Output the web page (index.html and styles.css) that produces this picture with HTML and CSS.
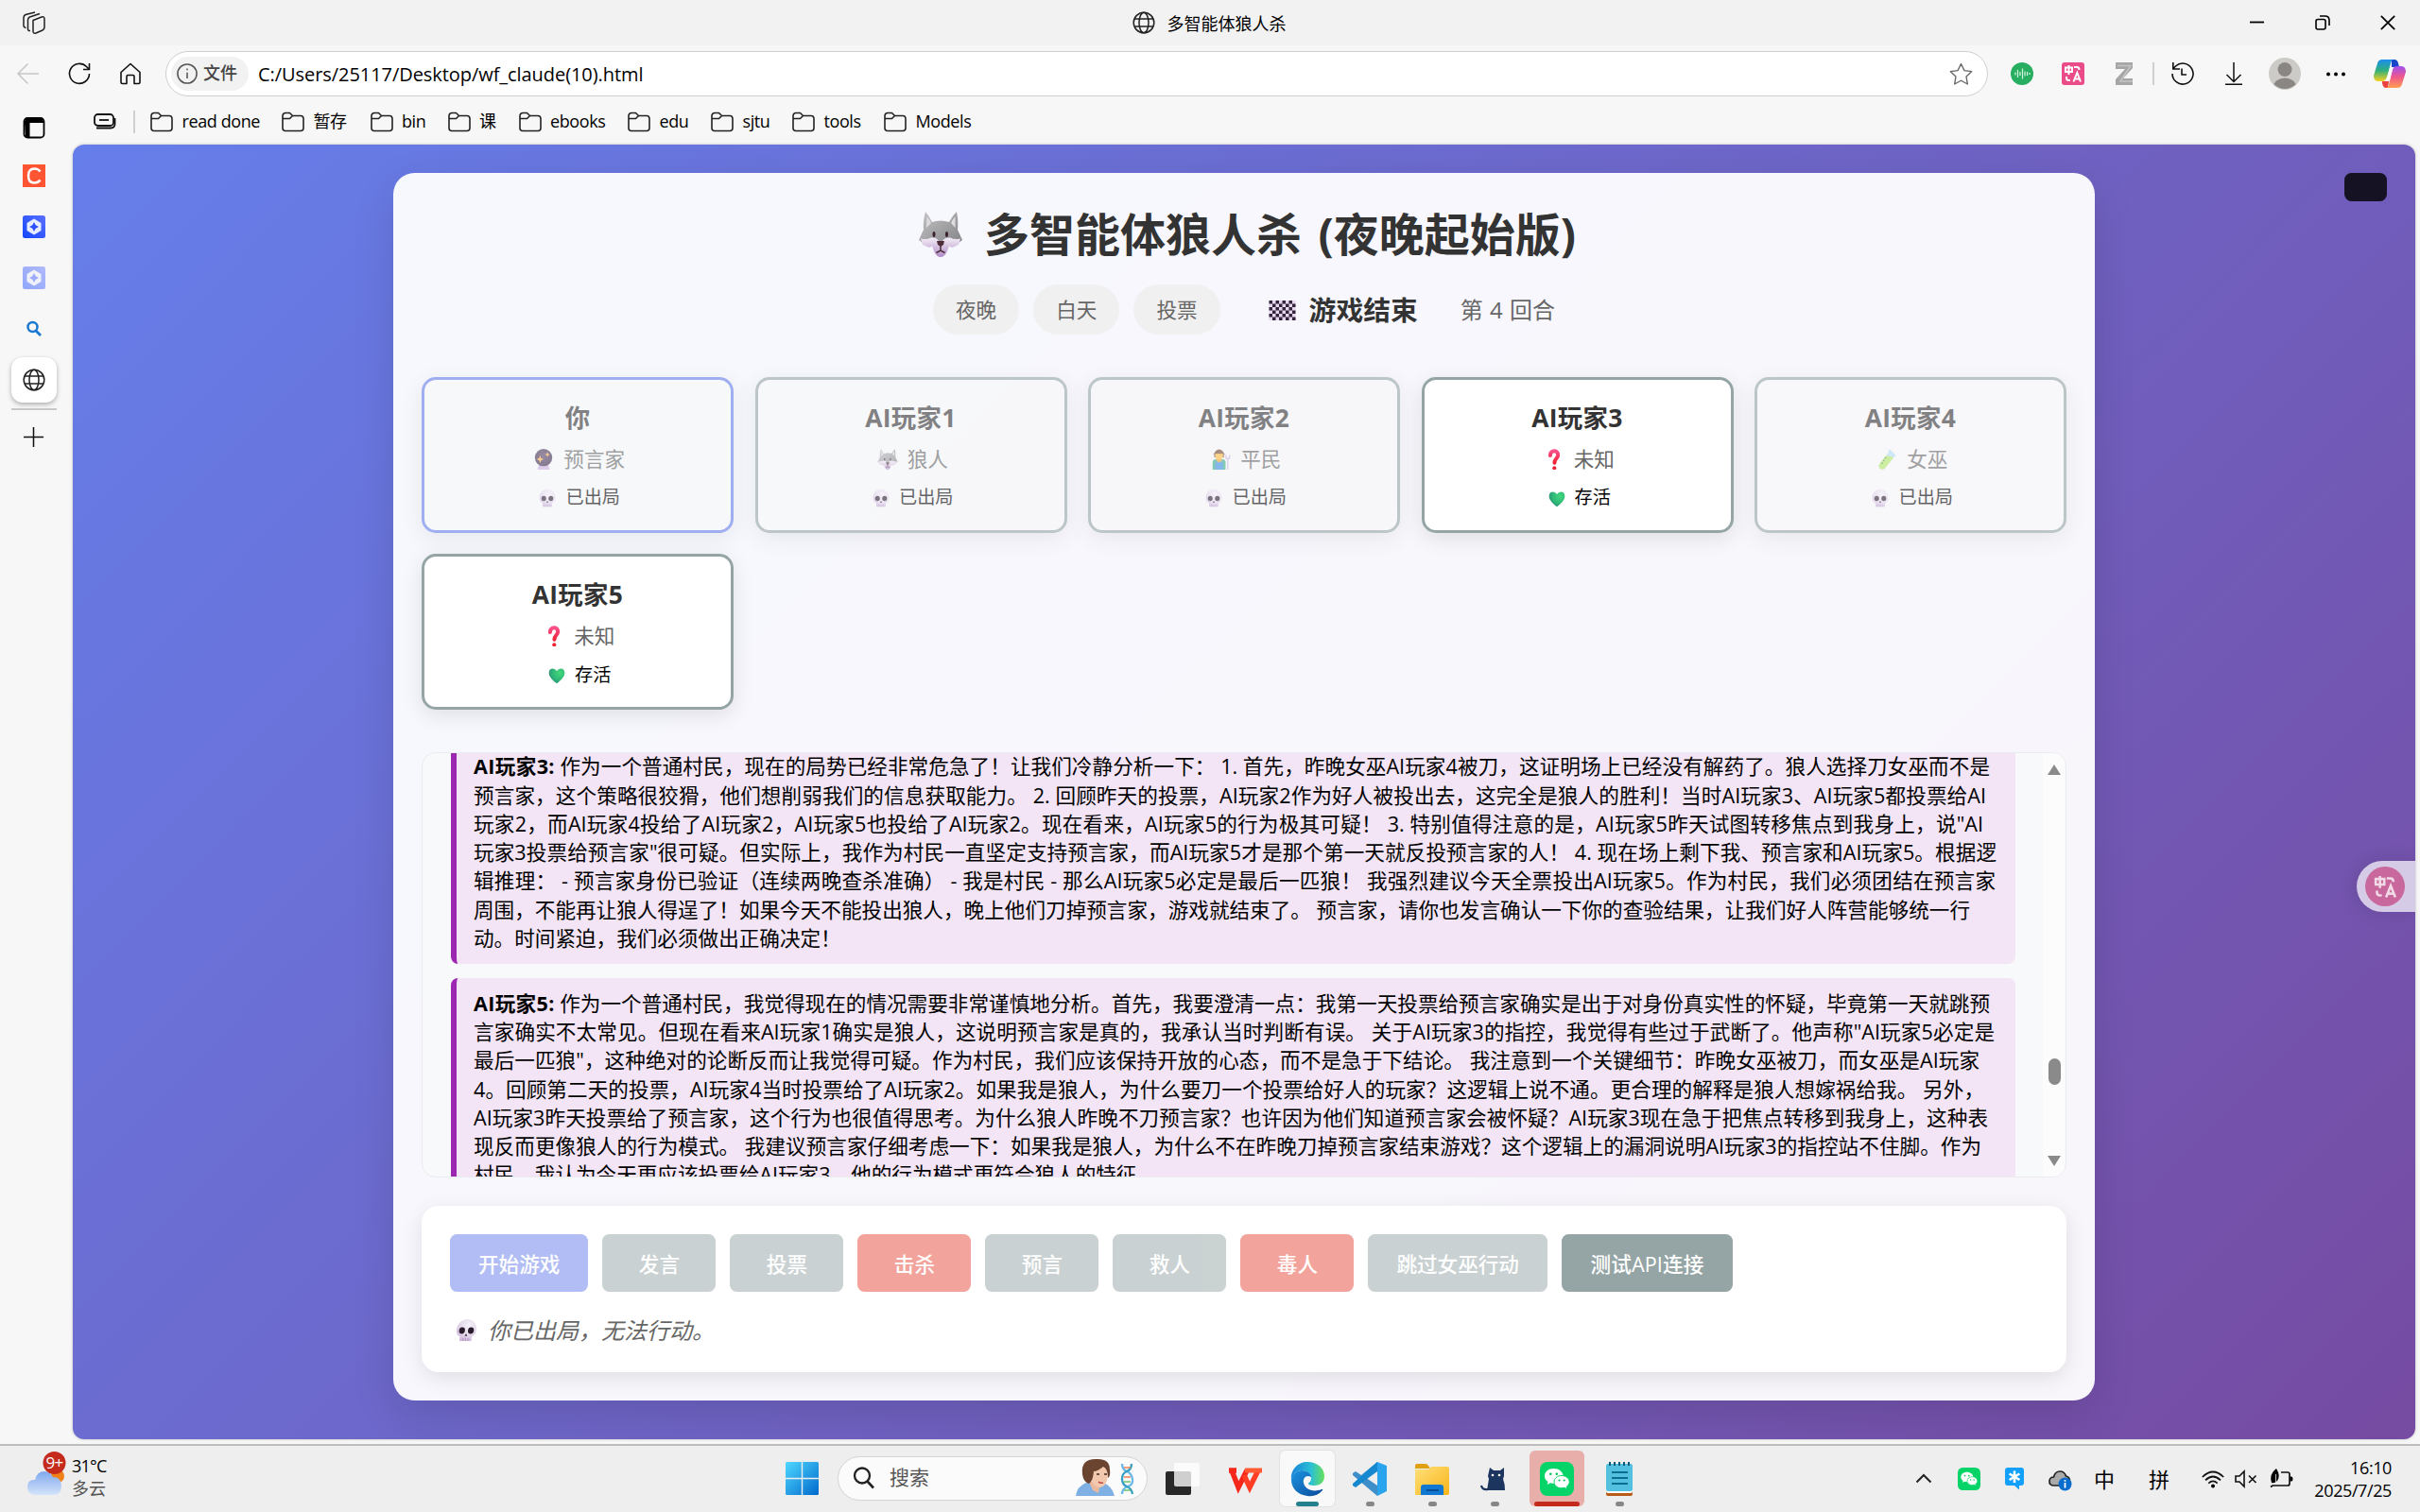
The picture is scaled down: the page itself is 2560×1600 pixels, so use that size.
FILE: index.html
```html
<!DOCTYPE html>
<html lang="zh-CN">
<head>
<meta charset="utf-8">
<title>多智能体狼人杀</title>
<link rel="stylesheet" href="styles.css">
</head>
<body>
<svg class="defs" aria-hidden="true">
  <defs>
    <linearGradient id="gWolf" x1="0" y1="0" x2="1" y2="1"><stop offset="0" stop-color="#c4c4c6"/><stop offset="1" stop-color="#7f7e82"/></linearGradient>
    <linearGradient id="gSnout" x1="0" y1="0" x2="0" y2="1"><stop offset="0" stop-color="#f4eef6"/><stop offset="1" stop-color="#b08cc8"/></linearGradient>
    <radialGradient id="gSkull" cx=".6" cy=".3" r=".8"><stop offset="0" stop-color="#f6f2fa"/><stop offset=".6" stop-color="#e2d6e8"/><stop offset="1" stop-color="#c6a6d6"/></radialGradient>
    <linearGradient id="gQ" x1="0" y1="0" x2="0" y2="1"><stop offset="0" stop-color="#f8508a"/><stop offset="1" stop-color="#f02238"/></linearGradient>
    <radialGradient id="gHeart" cx=".7" cy=".3" r=".8"><stop offset="0" stop-color="#42d67c"/><stop offset=".6" stop-color="#2fb876"/><stop offset="1" stop-color="#2c8a7c"/></radialGradient>
    <radialGradient id="gBall" cx=".5" cy=".4" r=".6"><stop offset="0" stop-color="#5a4468"/><stop offset="1" stop-color="#382848"/></radialGradient>
    <linearGradient id="gWin" x1="0" y1="0" x2="1" y2="1"><stop offset="0" stop-color="#4fd8ff"/><stop offset="1" stop-color="#0069cc"/></linearGradient>
    <linearGradient id="gCloud" x1="0" y1="0" x2="0" y2="1"><stop offset="0" stop-color="#7fa8ee"/><stop offset="1" stop-color="#d4e4fa"/></linearGradient>
    <linearGradient id="gEdge1" x1="0" y1="0" x2="1" y2="0"><stop offset="0" stop-color="#1683d8"/><stop offset=".6" stop-color="#2cc0d6"/><stop offset="1" stop-color="#66e05a"/></linearGradient>
    <linearGradient id="gEdge2" x1="0" y1="0" x2="1" y2="1"><stop offset="0" stop-color="#1b95e0"/><stop offset="1" stop-color="#0c4a9c"/></linearGradient>
    <linearGradient id="gFolder" x1="0" y1="0" x2="1" y2="1"><stop offset="0" stop-color="#ffe07a"/><stop offset="1" stop-color="#f9b418"/></linearGradient>
    <linearGradient id="gCopA" x1="0" y1="0" x2="0" y2="1"><stop offset="0" stop-color="#1b8cf0"/><stop offset=".5" stop-color="#2fb07c"/><stop offset="1" stop-color="#f8d020"/></linearGradient>
    <linearGradient id="gCopB" x1="0" y1="0" x2="0" y2="1"><stop offset="0" stop-color="#a04ff0"/><stop offset=".5" stop-color="#f0588c"/><stop offset="1" stop-color="#ffa050"/></linearGradient>
    <linearGradient id="gBlue" x1="0" y1="1" x2="1" y2="0"><stop offset="0" stop-color="#1446ff"/><stop offset="1" stop-color="#5a70ff"/></linearGradient>
    <symbol id="globe" viewBox="0 0 24 24"><g fill="none" stroke="#222" stroke-width="1.5"><circle cx="12" cy="12" r="10.8"/><ellipse cx="12" cy="12" rx="5" ry="10.8"/><path d="M2 8h20M2 16h20"/></g></symbol>
    <symbol id="folder" viewBox="0 0 24 24"><path d="M1 5.5A3 3 0 0 1 4 2.500h4.500l3 3H20a3 3 0 0 1 3 3V18.500a3 3 0 0 1-3 3H4a3 3 0 0 1-3-3ZM1 8.500h7.500l3-3" fill="none" stroke="#222" stroke-width="1.6" stroke-linejoin="round"/></symbol>
    <symbol id="wolf" viewBox="0 0 48 48">
      <path d="M8 0Q12 5 15 11Q24 8 33 11Q36 5 41 0Q43 10 42 19L47 30L40 35L34 34L24 40L14 34L8 35L1 30L6 19Q5 10 8 0Z" fill="url(#gWolf)"/>
      <path d="M9.500 5Q13 9 14 12L9 17ZM39.500 5Q36 9 35 12L39.500 17Z" fill="#dedbde"/>
      <path d="M3 28.500Q9 30 14 27.500Q20 27 22 31h4Q28 27 34 27.500Q39 30 45 28.500L43 35L36 38L33 36.500L30.500 43Q28 48 24 48T17.500 43L15 36.500L12 38L5 35Z" fill="url(#gSnout)"/>
      <ellipse cx="17" cy="24" rx="1.500" ry="3" fill="#3a2030"/><ellipse cx="30.500" cy="24" rx="1.500" ry="3" fill="#3a2030"/>
      <path d="M20 31h8l-1 4-3 2-3-2Z" fill="#4c2c38"/><path d="M24 36v5M19.500 43.500 24 41l4.500 2.500" fill="none" stroke="#4c2c38" stroke-width="1.500"/>
    </symbol>
    <symbol id="skull" viewBox="0 0 24 24">
      <path d="M12 1C6 1 2 6 2 11.500c0 4 1.500 6 4 7V23h12v-4.500c2.500-1 4-3 4-7C22 6 18 1 12 1Z" fill="url(#gSkull)"/>
      <ellipse cx="7.500" cy="12.500" rx="3" ry="3.300" fill="#2a1c2c"/><ellipse cx="16.500" cy="12.500" rx="3" ry="3.300" fill="#2a1c2c"/><path d="M12 15.500l1.300 2.500h-2.600Z" fill="#2a1c2c"/><path d="M9.500 20v3M12 20v3M14.500 20v3" stroke="#b092bd" stroke-width=".8"/>
    </symbol>
    <symbol id="ball" viewBox="0 0 24 24"><path d="M5 24l1.500-6h11l1.500 6Z" fill="#cdb0de"/><circle cx="12" cy="10" r="10" fill="url(#gBall)"/><path d="M8 7.500l1.200 3.300L12.500 12 9.200 13.200 8 16.500l-1.200-3.300L3.500 12l3.300-1.200ZM16.500 3.500l.8 2.200 2.200.8-2.200.8-.8 2.200-.8-2.200-2.200-.8 2.200-.8Z" fill="#ffb648"/></symbol>
    <symbol id="farmer" viewBox="0 0 24 24"><path d="M3 24v-8q0-4 3.500-4h8q3.500 0 3.500 4v8Z" fill="#35ad82"/><path d="M6 24v-7l2-3h5l2 3v7Z" fill="#3c8de0"/><path d="M7.500 10h6v4q-3 3-6 0Z" fill="#f0a030"/><ellipse cx="10.500" cy="7.500" rx="4.800" ry="5" fill="#ffbe3c"/><path d="M3 6.500q2-1 3.500-4 4-4 8 0 1.500 3 3.500 4-7-2-15 0Z" fill="#71482d"/><path d="M5.500 6v4M15.500 6v4" stroke="#71482d" stroke-width="1.200"/><path d="M20.500 11v13M18.500 7v4h4V7" fill="none" stroke="#c9b4de" stroke-width="1.500"/></symbol>
    <symbol id="question" viewBox="0 0 24 24"><path d="M7.500 7.500C7.500 1 16.500 1 16.500 7c0 4-4 4-4 9" fill="none" stroke="url(#gQ)" stroke-width="4.400" stroke-linecap="round"/><circle cx="12.300" cy="22" r="2.200" fill="#f02238"/></symbol>
    <symbol id="tube" viewBox="0 0 24 24"><path d="M15 0l8 8-3 1.500L9.500 22.500q-3 2-5.500 0t0-6L13.500 5Z" fill="#b8ddf4"/><path d="M11 8l9 1.500L9.500 22.500q-3 2-5.500 0t0-6Z" fill="#b1e764"/><path d="M9.500 10l2 1M7.500 13l2 1M5.500 16l2 1" stroke="#4a9850" stroke-width="1.300"/></symbol>
    <symbol id="heart" viewBox="0 0 24 24"><path d="M12 23C4 17 2 13 2 9.500c0-6 7-7 10-2 3-5 10-4 10 2 0 3.500-2 7.500-10 13.500Z" fill="url(#gHeart)"/></symbol>
    <symbol id="wechat" viewBox="0 0 36 36"><rect width="36" height="36" rx="8" fill="#06d468"/><path d="M14.500 7C9 7 5 10.500 5 15c0 2.500 1.300 4.500 3.500 6l-.8 3 3.300-1.700 4 .7c5 0 9.500-3.500 9.500-8S20 7 14.500 7Z" fill="#fff"/><path d="M23 14.500c-4.500 0-8 3-8 6.700s3.500 6.600 8 6.600l3-.5 3 1.700-.8-2.800c1.800-1.300 3-3 3-5 0-3.700-3.700-6.700-8.200-6.700Z" fill="#fff" stroke="#06d468"/><g fill="#06c45c"><circle cx="11.300" cy="12.800" r="1.300"/><circle cx="17.800" cy="12.800" r="1.300"/><circle cx="20.500" cy="19.500" r="1.100"/><circle cx="25.700" cy="19.500" r="1.100"/></g></symbol>
    <symbol id="gem" viewBox="0 0 24 24"><rect width="24" height="24" rx="2.500" fill="url(#gBlue)"/><path d="M12 3.500 19.500 8v8L12 20.500 4.500 16V8Z" fill="#e8edff"/><path d="M12 7l1.700 3.300L17 12l-3.300 1.700L12 17l-1.700-3.300L7 12l3.300-1.700Z" fill="#2c50ff"/></symbol>
    <symbol id="translate" viewBox="0 0 24 24"><g fill="none" stroke="#fff" stroke-width="2"><path d="M4 5.500h7v4.500H4ZM7.500 3v10M13 5h3q2.500 0 2.500 3M5 15v1.500q0 2.500 2.500 2.500h1.500"/><path d="M12.500 20.500 16.300 11l3.700 9.500M13.700 17.500h5.200"/></g></symbol>
    <symbol id="checker" viewBox="0 0 16 12"><rect width="16" height="12" fill="#e6d6ee"/><path d="M0 1h16M0 5h16M0 9h16" stroke="#32243c" stroke-width="2" stroke-dasharray="2 2"/><path d="M2 3h14M2 7h14M2 11h14" stroke="#32243c" stroke-width="2" stroke-dasharray="2 2"/></symbol>
  </defs>
</svg>

<header class="titlebar">
  <svg class="workspaces" viewBox="0 0 24 24"><g fill="none" stroke="#222" stroke-width="1.500" stroke-linejoin="round"><path d="M11 9.500 20 6q3-1 3 2v9q0 2-2 3l-7 3q-3 1-3-2Z"/><path d="M8 20.500q-2.500.500-2.500-2V9q0-2 2-3L18 2.500"/><path d="M3.500 17.500Q1 17 1 15V6.500q0-2 2-3L13 1"/></g></svg>
  <div class="tab-title"><svg class="i24"><use href="#globe"/></svg><span>多智能体狼人杀</span></div>
  <div class="window-buttons">
    <svg viewBox="0 0 16 16"><path d="M0 7.500h15" stroke="#000" stroke-width="1.800"/></svg>
    <svg viewBox="0 0 16 16"><g fill="none" stroke="#000" stroke-width="1.600"><rect x="1" y="4.500" width="10" height="10.500" rx="2"/><path d="M5 1h5.500Q15 1 15 5.500V11"/></g></svg>
    <svg viewBox="0 0 16 16"><path d="M.8.8l14.400 14.400M15.200.8.8 15.200" stroke="#000" stroke-width="1.700"/></svg>
  </div>
</header>

<div class="toolbar">
  <div class="nav">
    <svg viewBox="0 0 24 24"><path d="M23 12H1M11.500 1.500 1 12l10.500 10.500" stroke="#c6c6c6" stroke-width="1.500" fill="none"/></svg>
    <svg viewBox="0 0 24 24"><path d="M22.500 12A10.500 10.500 0 1 1 19.500 4.500L22 7M22.500 1v6.500H16" stroke="#111" stroke-width="1.600" fill="none"/></svg>
    <svg viewBox="0 0 24 24"><path d="M2 10.500 12 1.500l10 9V21q0 1.500-1.500 1.500h-4.500V15q0-1.500-1.500-1.500h-5Q8 13.500 8 15v7.500H3.500Q2 22.500 2 21Z" stroke="#111" stroke-width="1.600" fill="none" stroke-linejoin="round"/></svg>
  </div>
  <div class="omnibox">
    <div class="scheme"><svg viewBox="0 0 24 24"><g fill="none" stroke="#555" stroke-width="1.700"><circle cx="12" cy="12" r="11"/><path d="M12 10.500v7M12 6v2"/></g></svg>文件</div>
    <span class="url">C:/Users/25117/Desktop/wf_claude(10).html</span>
    <svg class="star" viewBox="0 0 24 24"><path d="M12 1.500l3.300 6.800 7.400 1-5.400 5.200 1.300 7.600L12 18.500l-6.600 3.600 1.300-7.600L1.300 9.300l7.400-1Z" fill="none" stroke="#666" stroke-width="1.300" stroke-linejoin="round"/></svg>
  </div>
  <div class="actions">
    <span class="cell"><svg class="i24" viewBox="0 0 24 24"><circle cx="12" cy="12" r="12" fill="#27ae60"/><path d="M5 10.500v3M7.500 8v8M10 10v4M12.500 6.500v11M15 9.500v5M17.500 10v4M20 11v2" stroke="#d4f5e0" stroke-width="1.200"/></svg></span>
    <span class="cell"><svg class="i24"><rect width="24" height="24" rx="3" fill="#ea4c89"/><use href="#translate"/></svg></span>
    <span class="cell"><svg class="i24" viewBox="0 0 24 24"><path d="M3 0h18v6L11 17h10v7H3v-6L13 7H3Z" fill="#a6a6a6"/><path d="M5 3.500h14L8 20h13" fill="none" stroke="#c4c4c4" stroke-width="1.500"/></svg></span>
    <span class="bar"></span>
    <span class="cell"><svg class="i24" viewBox="0 0 24 24"><path d="M1 12A11 11 0 1 0 4.500 4L1.500 7M1.800 0v7H9M11 6.500V13h5" fill="none" stroke="#111" stroke-width="1.600"/></svg></span>
    <span class="cell"><svg class="i24" viewBox="0 0 24 24"><path d="M12 0v20M4.500 13 12 20.500 19.500 13M3 23.200h18" fill="none" stroke="#111" stroke-width="1.500"/></svg></span>
    <span class="cell"><svg class="avatar" viewBox="0 0 34 34"><clipPath id="cav"><circle cx="17" cy="17" r="16"/></clipPath><circle cx="17" cy="17" r="17" fill="#cdcbc7"/><circle cx="17" cy="12.500" r="7.500" fill="#8a8683"/><ellipse cx="17" cy="31" rx="12" ry="9.500" fill="#8a8683" clip-path="url(#cav)"/></svg></span>
    <span class="cell"><svg class="i24" viewBox="0 0 24 24"><circle cx="4" cy="12.500" r="2"/><circle cx="12" cy="12.500" r="2"/><circle cx="20" cy="12.500" r="2"/></svg></span>
    <span class="cell wide"><svg class="avatar" viewBox="0 0 34 34"><path d="M19 2h3q3 0 4 4l1 4h-8Z" fill="#1846c8"/><path d="M9 2h12q-2 0-3 4l-4 15q-1 4-5 4H5q-5 0-5-6L4 6q1-4 5-4Z" fill="url(#gCopA)"/><path d="M9 25h7l-1 7h-2q-3 0-4-5Z" fill="#ee4040"/><path d="M25 32H13q2 0 3-4l4-15q1-4 5-4h4q5 0 5 6l-4 13q-1 4-5 4Z" fill="url(#gCopB)"/><path d="M14 21l3-10h3l-3 13h-5Z" fill="#fff"/></svg></span>
  </div>
</div>

<div class="browser-body">
  <aside class="sidebar">
    <svg class="i24 pane" viewBox="0 0 24 24"><rect x="1.500" y="2" width="21" height="20.500" rx="3.500" fill="none" stroke="#000" stroke-width="1.800"/><path d="M2 6h20M2.500 4h19" stroke="#000" stroke-width="2"/><path d="M2 6h5.500v16H3Z"/></svg>
    <svg class="i24" viewBox="0 0 24 24"><rect width="24" height="24" fill="#ff5533"/><path d="M18.500 7.500Q16.500 4.500 12.500 4.500 6 4.500 6 12t6.500 7.500q4 0 6-3" fill="none" stroke="#fff" stroke-width="2.500"/></svg>
    <svg class="i24"><use href="#gem"/></svg>
    <svg class="i24 faded"><use href="#gem"/></svg>
    <svg class="i24" viewBox="0 0 24 24"><circle cx="10.500" cy="10" r="5" fill="none" stroke="#1a78d0" stroke-width="2.500"/><path d="M14 14l5 5" stroke="#1a78d0" stroke-width="2.800"/></svg>
    <div class="active-tab"><svg class="i24"><use href="#globe"/></svg></div>
    <i class="tab-line"></i>
    <svg class="plus" viewBox="0 0 22 22"><path d="M11 0v22M0 11h22" stroke="#111" stroke-width="1.600"/></svg>
  </aside>

  <div class="content">
    <nav class="bookmarks">
      <svg class="i24 pass" viewBox="0 0 24 24"><rect x="1" y="4" width="20" height="12" rx="3.500" fill="none" stroke="#111" stroke-width="1.800"/><path d="M6 10h10" stroke="#111" stroke-width="1.800"/><path d="M3 18.500h15q4.500 0 4.500-4.500V8" fill="none" stroke="#111" stroke-width="1.800"/></svg>
      <i class="bar"></i>
      <div class="folders">
        <span><svg class="i24"><use href="#folder"/></svg>read done</span>
        <span><svg class="i24"><use href="#folder"/></svg>暂存</span>
        <span><svg class="i24"><use href="#folder"/></svg>bin</span>
        <span><svg class="i24"><use href="#folder"/></svg>课</span>
        <span><svg class="i24"><use href="#folder"/></svg>ebooks</span>
        <span><svg class="i24"><use href="#folder"/></svg>edu</span>
        <span><svg class="i24"><use href="#folder"/></svg>sjtu</span>
        <span><svg class="i24"><use href="#folder"/></svg>tools</span>
        <span><svg class="i24"><use href="#folder"/></svg>Models</span>
      </div>
    </nav>

    <main class="viewport">
      <div class="debug-pill"></div>
      <div class="translate-tab"><svg viewBox="0 0 42 42"><circle cx="21" cy="21" r="21" fill="#c8689c"/><use href="#translate" x="6" y="6" width="31" height="31" opacity=".75"/></svg></div>

      <section class="game">
        <h1><svg><use href="#wolf"/></svg>多智能体狼人杀 (夜晚起始版)</h1>
        <div class="phases">
          <span class="pill">夜晚</span><span class="pill">白天</span><span class="pill">投票</span>
          <strong><svg><use href="#checker"/></svg>游戏结束</strong>
          <span class="round">第 4 回合</span>
        </div>

        <div class="players">
          <article class="player me out"><h2>你</h2><p class="role"><svg><use href="#ball"/></svg>预言家</p><p class="status"><svg><use href="#skull"/></svg>已出局</p></article>
          <article class="player out"><h2>AI玩家1</h2><p class="role"><svg><use href="#wolf"/></svg>狼人</p><p class="status"><svg><use href="#skull"/></svg>已出局</p></article>
          <article class="player out"><h2>AI玩家2</h2><p class="role"><svg><use href="#farmer"/></svg>平民</p><p class="status"><svg><use href="#skull"/></svg>已出局</p></article>
          <article class="player"><h2>AI玩家3</h2><p class="role"><svg><use href="#question"/></svg>未知</p><p class="status"><svg><use href="#heart"/></svg>存活</p></article>
          <article class="player out"><h2>AI玩家4</h2><p class="role"><svg><use href="#tube"/></svg>女巫</p><p class="status"><svg><use href="#skull"/></svg>已出局</p></article>
          <article class="player"><h2>AI玩家5</h2><p class="role"><svg><use href="#question"/></svg>未知</p><p class="status"><svg><use href="#heart"/></svg>存活</p></article>
        </div>

        <div class="log">
          <div class="messages">
            <div class="message first">
              <p><b>AI玩家3:</b> 作为一个普通村民，现在的局势已经非常危急了！让我们冷静分析一下： 1. 首先，昨晚女巫AI玩家4被刀，这证明场上已经没有解药了。狼人选择刀女巫而不是</p>
              <p>预言家，这个策略很狡猾，他们想削弱我们的信息获取能力。 2. 回顾昨天的投票，AI玩家2作为好人被投出去，这完全是狼人的胜利！当时AI玩家3、AI玩家5都投票给AI</p>
              <p>玩家2，而AI玩家4投给了AI玩家2，AI玩家5也投给了AI玩家2。现在看来，AI玩家5的行为极其可疑！ 3. 特别值得注意的是，AI玩家5昨天试图转移焦点到我身上，说"AI</p>
              <p>玩家3投票给预言家"很可疑。但实际上，我作为村民一直坚定支持预言家，而AI玩家5才是那个第一天就反投预言家的人！ 4. 现在场上剩下我、预言家和AI玩家5。根据逻</p>
              <p>辑推理： - 预言家身份已验证（连续两晚查杀准确） - 我是村民 - 那么AI玩家5必定是最后一匹狼！ 我强烈建议今天全票投出AI玩家5。作为村民，我们必须团结在预言家</p>
              <p>周围，不能再让狼人得逞了！如果今天不能投出狼人，晚上他们刀掉预言家，游戏就结束了。 预言家，请你也发言确认一下你的查验结果，让我们好人阵营能够统一行</p>
              <p>动。时间紧迫，我们必须做出正确决定！</p>
            </div>
            <div class="message second">
              <p><b>AI玩家5:</b> 作为一个普通村民，我觉得现在的情况需要非常谨慎地分析。首先，我要澄清一点：我第一天投票给预言家确实是出于对身份真实性的怀疑，毕竟第一天就跳预</p>
              <p>言家确实不太常见。但现在看来AI玩家1确实是狼人，这说明预言家是真的，我承认当时判断有误。 关于AI玩家3的指控，我觉得有些过于武断了。他声称"AI玩家5必定是</p>
              <p>最后一匹狼"，这种绝对的论断反而让我觉得可疑。作为村民，我们应该保持开放的心态，而不是急于下结论。 我注意到一个关键细节：昨晚女巫被刀，而女巫是AI玩家</p>
              <p>4。回顾第二天的投票，AI玩家4当时投票给了AI玩家2。如果我是狼人，为什么要刀一个投票给好人的玩家？这逻辑上说不通。更合理的解释是狼人想嫁祸给我。 另外，</p>
              <p>AI玩家3昨天投票给了预言家，这个行为也很值得思考。为什么狼人昨晚不刀预言家？也许因为他们知道预言家会被怀疑？AI玩家3现在急于把焦点转移到我身上，这种表</p>
              <p>现反而更像狼人的行为模式。 我建议预言家仔细考虑一下：如果我是狼人，为什么不在昨晚刀掉预言家结束游戏？这个逻辑上的漏洞说明AI玩家3的指控站不住脚。作为</p>
              <p>村民，我认为今天更应该投票给AI玩家3，他的行为模式更符合狼人的特征。</p>
            </div>
          </div>
          <div class="scrollbar"><i class="up"></i><i class="thumb"></i><i class="down"></i></div>
        </div>

        <div class="panel">
          <div class="buttons">
            <button class="primary off">开始游戏</button><button class="off">发言</button><button class="off">投票</button><button class="danger off">击杀</button><button class="off">预言</button><button class="off">救人</button><button class="danger off">毒人</button><button class="off">跳过女巫行动</button><button class="test">测试API连接</button>
          </div>
          <p class="hint"><svg><use href="#skull"/></svg><em>你已出局，无法行动。</em></p>
        </div>
      </section>
    </main>
  </div>
</div>

<footer class="taskbar">
  <div class="weather">
    <svg viewBox="0 0 48 48"><circle cx="33" cy="26" r="7" fill="#f08018"/><path d="M10 46q-9 0-9-8.500T9 30q2-9 10-9 6 0 9 6 9 0 9 9.500 0 9.500-9 9.500Z" fill="url(#gCloud)"/><circle cx="29.500" cy="12" r="12" fill="#c42b1c"/><text x="29.500" y="18" text-anchor="middle" class="badge">9+</text></svg>
    <div><span>31°C</span><span class="dim">多云</span></div>
  </div>
  <div class="pinned">
    <svg class="start" viewBox="0 0 35 35"><path d="M0 1.500Q0 0 1.500 0H16.800V16.800H0ZM18.200 0H33.500Q35 0 35 1.500V16.800H18.200ZM0 18.200H16.800V35H1.500Q0 35 0 33.500ZM18.200 18.200H35V33.500Q35 35 33.500 35H18.200Z" fill="url(#gWin)"/></svg>
    <div class="search">
      <svg viewBox="0 0 24 24" class="mag"><circle cx="10" cy="9.500" r="8" fill="none" stroke="#222" stroke-width="2.300"/><path d="M15.500 15.500 22 22.500" stroke="#222" stroke-width="2.600"/></svg>
      <span>搜索</span>
      <svg viewBox="0 0 64 40" class="art"><path d="M0 39q1-10 11-14h18q9 3 12 14Z" fill="#7fb0e4"/><path d="M14 24h12l-2 12-6-3Z" fill="#eab89c"/><ellipse cx="25" cy="17" rx="9" ry="13" fill="#f2c8ae"/><path d="M7 16Q5 0 21 0q15-1 15 11 1 7-2 9 0-10-5-12-6 5-10 5-1 11-5 13-6-2-7-10Z" fill="#6b4430"/><path d="M22 16h3M30 16h3" stroke="#402820" stroke-width="1.500"/><path d="M29 25q-3 1-5-1" stroke="#c04848" stroke-width="1.500" fill="none"/><g fill="none" stroke-width="2.300"><path d="M49 5q0 6 5 8t6 8-5 8-6 8" stroke="#6cb8e8"/><path d="M59 5q0 6-5 8t-5 8 5 8 6 8" stroke="#38a0c0"/><path d="M51 9h7M51 19h7" stroke="#f08050" stroke-width="1.700"/><path d="M51 24h7M51 33h7" stroke="#68c468" stroke-width="1.700"/></g></svg>
    </div>
    <div class="apps">
      <span class="app"><svg viewBox="0 0 36 36"><rect x="0" y="10" width="27" height="25" rx="2" fill="#282828"/><rect x="9" y="1" width="27" height="25" rx="2" fill="#fff" fill-opacity=".78"/></svg></span>
      <span class="app"><svg viewBox="0 0 36 36"><path d="M1 9H9M4 9l7 18 9-18" fill="none" stroke="#f5261a" stroke-width="5.500"/><path d="M17 14l6 13 9-18" fill="none" stroke="#ff3c24" stroke-width="5.500"/><path d="M18 9H36" stroke="#ff5a34" stroke-width="5"/></svg></span>
      <span class="app open"><svg viewBox="0 0 36 36"><path d="M1 19C0 8 8 0 18 0c11 0 18 7 18 15 0 7-5 10-11 10-4 0-6-1-6-2s3-2 3-6c0-5-5-8-10-8C6 9 2 13 1 19Z" fill="url(#gEdge1)"/><path d="M1 19C2 12 7 9 12 9c5 0 10 3 10 7-5-3-9 1-8 6 1 6 9 11 19 7q2-1 1 1c-4 5-10 7-16 6C8 35 1 28 1 19Z" fill="url(#gEdge2)"/></svg><i></i></span>
      <span class="app run"><svg viewBox="0 0 36 36"><path d="M26 0 9 14 3 10 0 12v2l20 17 6 5V25L10 14 26 10Z" fill="#1076bf" opacity=".8"/><path d="M26 0v10L3 27l-3-2v-2Z" fill="#1588d0"/><path d="M26 0l10 4v27l-10 5Z" fill="#2ba4ee"/></svg><i></i></span>
      <span class="app run"><svg viewBox="0 0 36 36"><path d="M0 4q0-2 2-2h9q2 0 3 2l2 3H0Z" fill="#e0a010"/><path d="M0 8h14l3-3h17q2 0 2 2v26q0 2-2 2H0Z" fill="url(#gFolder)"/><path d="M6 35V27q0-3 3-3h18q3 0 3 3v8Z" fill="#1177d0"/><path d="M12 30h13" stroke="#084a90" stroke-width="1.800"/></svg><i></i></span>
      <span class="app run"><svg viewBox="0 0 36 36"><path d="M13 6l4 3h7l4-3v9l-1 3q2 5 2 12H10l2-12-1-3Z" fill="#1c355e"/><path d="M11 29q-6 1-7-4" fill="none" stroke="#1c355e" stroke-width="2.200"/><circle cx="16" cy="14" r="1.300" fill="#fff"/><circle cx="23" cy="14" r="1.300" fill="#fff"/></svg><i></i></span>
      <span class="app alert"><svg><use href="#wechat"/></svg><i></i></span>
      <span class="app run"><svg viewBox="0 0 36 36"><rect x="4" y="28" width="28" height="8" rx="2" fill="#b85c18"/><rect x="4" y="2" width="28" height="31" rx="2" fill="#fff"/><rect x="4" y="2" width="28" height="29" rx="2" fill="#52c0de"/><path d="M10 11h17M10 17h17M10 23h17" stroke="#0c6c94" stroke-width="2"/><path d="M8 0v4M13 0v4M18 0v4M23 0v4M28 0v4" stroke="#0c5878" stroke-width="2"/></svg><i></i></span>
    </div>
  </div>
  <div class="tray">
    <span class="t48"><svg class="i24" viewBox="0 0 24 24"><path d="M4.500 15.500 12 8l7.500 7.500" fill="none" stroke="#222" stroke-width="2"/></svg></span>
    <span class="t48"><svg class="i24"><use href="#wechat"/></svg></span>
    <span class="t48"><svg class="i24" viewBox="0 0 24 24"><path d="M5 0h14q3 0 3 3v13q0 3-3 3h-2v4.500L12 19H5q-3 0-3-3V3q0-3 3-3Z" fill="#12a0fa"/><path d="M12 3.500v12.500M6.600 6.500l10.800 6.500M17.400 6.500 6.600 13" stroke="#fff" stroke-width="2.600"/></svg></span>
    <span class="t48"><svg class="i24" viewBox="0 0 24 24"><path d="M6 19q-5.500 0-5-5 .5-4 4.500-4Q7 4 12 4q5 0 6.500 5 4 1 4 5 0 5-5 5Z" fill="#aaa" stroke="#222" stroke-width="1.700"/><circle cx="17.500" cy="17.500" r="7" fill="#0a6ccc"/><path d="M17.500 16v5.500M17.500 13v1.800" stroke="#fff" stroke-width="1.800"/></svg></span>
    <span class="ime t46">中</span>
    <span class="ime t70">拼</span>
    <span class="t44"><svg class="i24" viewBox="0 0 24 24"><g fill="none" stroke="#111" stroke-width="1.700"><path d="M.8 10Q12-1 23.200 10M4 13.300q8-7.600 16 0M7.300 16.600q4.700-4.400 9.400 0"/></g><circle cx="12" cy="19.500" r="2"/></svg></span>
    <span class="t26"><svg class="i24" viewBox="0 0 24 24"><path d="M1 9h4l5-5v16l-5-5H1ZM15 8.500l7.500 7.500M22.500 8.500 15 16" fill="none" stroke="#111" stroke-width="1.600"/></svg></span>
    <span class="t48"><svg class="i24" viewBox="0 0 24 24"><path d="M12 5h7q2 0 2 2v10q0 2-2 2H3l-2 1.500" fill="none" stroke="#111" stroke-width="1.700"/><path d="M21.500 9.500H23q1.500 0 1.500 2.500T23 14.500h-1.500ZM2 16Q-1 7 7 1q5 8 1 13-3 3-6 2Z"/><path d="M6.500 7v9" stroke="#eee" stroke-width=".8"/></svg></span>
    <div class="clock"><span>16:10</span><span>2025/7/25</span></div>
  </div>
</footer>
</body>
</html>
```
FILE: styles.css
```css
* { box-sizing: border-box; }
body {
  margin: 0; width: 2560px; height: 1600px; overflow: hidden;
  display: flex; flex-direction: column;
  background: #f7f7f7; color: #000;
  font: 18px/1.4 "Open Sans", "Noto Sans CJK SC", sans-serif;
}
h1, h2, p { margin: 0; }
svg { display: block; flex: none; overflow: visible; }
.defs { position: absolute; width: 0; height: 0; }
.i24 { width: 24px; height: 24px; }
.faded { opacity: .45; }

.titlebar { height: 48px; background: #f2f2f2; display: grid; grid-template-columns: 1fr auto 1fr; align-items: center; padding: 0 26px 0 24px; }
.workspaces { width: 24px; height: 24px; }
.tab-title { display: flex; align-items: center; gap: 13px; line-height: 24px; }
.tab-title span { padding-top: 2px; }
.window-buttons { display: flex; justify-content: flex-end; gap: 53px; }
.window-buttons svg { width: 16px; height: 16px; }

.toolbar { height: 57px; display: flex; align-items: center; padding: 3px 2px 0 18px; }
.nav { display: flex; gap: 30px; width: 157px; }
.nav svg { width: 24px; height: 24px; }
.omnibox { width: 1928px; height: 48px; border: 1.5px solid #cfcfcf; border-radius: 24px; background: #fff; display: flex; align-items: center; padding: 0 15px 0 5px; }
.scheme { width: 82px; height: 36px; border-radius: 18px; background: #f2f2f2; display: flex; align-items: center; gap: 6px; padding-left: 6px; font-weight: 500; color: #444; }
.scheme svg { width: 22px; height: 22px; }
.url { flex: 1; margin-left: 10px; padding-top: 1px; font-size: 20px; letter-spacing: -.06px; }
.star { width: 25px; height: 25px; }
.actions { display: flex; align-items: center; margin-left: 9px; }
.cell { width: 54px; display: flex; justify-content: center; }
.cell.wide { width: 60px; }
.avatar { width: 34px; height: 34px; }
.bar { width: 2px; height: 24px; background: #cfcfcf; }
.actions .bar { margin: 0 3px; }

.browser-body { height: 1423px; display: flex; }
.sidebar { width: 77px; display: flex; flex-direction: column; align-items: center; padding: 18px 6px 0 0; gap: 30px; }
.sidebar .pane { margin-bottom: -3px; }
.sidebar .active-tab { width: 48px; height: 48px; margin-top: -12px; border-radius: 12px; background: #fff; box-shadow: 0 2px 5px rgba(0,0,0,.3); display: grid; place-items: center; }
.tab-line { width: 48px; height: 2px; margin-top: -24px; background: #c8c8c8; }
.plus { width: 21px; height: 21px; margin-top: -12px; }
.content { flex: 1; padding-right: 5px; }

.bookmarks { height: 48px; display: flex; align-items: center; padding-left: 22px; }
.pass { margin-right: 18px; }
.bookmarks .bar { width: 1.5px; }
.folders { margin-left: 16.5px; display: grid; grid-template-columns: 139px 93.5px 82px 75px 115.5px 88px 86px 97px 100px; letter-spacing: -.4px; }
.folders span { display: flex; align-items: center; gap: 9.5px; white-space: nowrap; }

.viewport { position: relative; height: 1370px; border-radius: 12px; overflow: hidden; padding-top: 30px; background: linear-gradient(135deg, #667eea 0%, #764ba2 100%); box-shadow: 0 0 3px rgba(0,0,0,.25); }
.debug-pill { position: absolute; top: 30px; right: 30px; width: 45px; height: 30px; border-radius: 7.5px; background: #151223; }
.translate-tab { position: absolute; right: 0; top: 758px; width: 62px; height: 54px; border-radius: 27px 0 0 27px; background: #d6cbe6; padding: 6px 0 0 9px; box-shadow: 0 0 20px rgba(0,0,0,.12); }
.translate-tab svg { width: 42px; height: 42px; }

.game { width: 1800px; height: 1299px; margin: 0 auto; padding: 30px; border-radius: 22.5px; background: rgba(255,255,255,.95); box-shadow: 0 15px 45px rgba(0,0,0,.12); }
h1 { display: flex; justify-content: center; align-items: center; gap: 22px; height: 70px; padding-left: 6px; font-size: 48px; word-spacing: 5px; color: #333; white-space: nowrap; }
h1 svg { width: 48px; height: 48px; }
.phases { display: flex; justify-content: center; align-items: center; height: 53px; margin-top: 18px; color: #666; }
.pill { width: 91.2px; height: 53px; margin-right: 15px; border-radius: 30px; background: #f0f0f0; font-size: 21.6px; line-height: 53px; text-align: center; }
.phases strong { display: flex; align-items: center; gap: 14px; margin: 1px 45px 0 36px; font-size: 28.8px; color: #333; }
.phases strong svg { width: 29px; height: 21px; }
.round { font-size: 24px; word-spacing: 1px; }

.players { display: grid; grid-template-columns: repeat(5, 330px); gap: 22.5px; margin-top: 45px; }
.player { height: 164.7px; border: 3px solid #95a5a6; border-radius: 15px; background: #fff; box-shadow: 0 6px 22px rgba(0,0,0,.1); text-align: center; padding-top: 22.3px; }
.player.me { border-color: #667eea; }
.player.out { opacity: .6; background: #f8f8f8; }
.player h2 { font-size: 26.4px; line-height: 37px; letter-spacing: .3px; color: #333; }
.player p { display: flex; justify-content: center; align-items: center; padding-left: 3.5px; }
.role { height: 30px; margin-top: 10px; gap: 10px; font-size: 21.6px; color: #666; }
.role svg { width: 22px; height: 22px; }
.status { height: 27px; margin-top: 12px; gap: 9px; font-size: 19.2px; }
.status svg { width: 20px; height: 20px; }

.log { display: flex; height: 450px; margin-top: 45px; border: 1.5px solid #e9ecef; border-radius: 15px; background: #f8f9fa; overflow: hidden; }
.messages { width: 1714px; padding: 0 29px 0 30px; overflow: hidden; }
.message { margin: 0 0 15px; padding: 12px 15px 12px 18px; border-left: 6px solid #9c27b0; border-radius: 7.5px; background: #f3e5f5; font-size: 21.6px; line-height: 30.24px; white-space: nowrap; }
.message p { width: 1604px; text-align: justify; text-align-last: justify; }
.message b { letter-spacing: .3px; }
.first { margin-top: -12.5px; }
.first p:nth-child(2) { width: 1600px; }
.first p:nth-child(3) { width: 1597px; }
.first p:nth-child(4) { width: 1611px; }
.first p:nth-child(5) { width: 1610px; }
.first p:nth-child(6) { width: 1583px; }
.second p:nth-child(2) { width: 1609px; }
.second p:nth-child(3) { width: 1593px; }
.second p:nth-child(4) { width: 1598px; }
.second p:nth-child(5) { width: 1602px; }
.second p:nth-child(6) { width: 1595px; }
.message p:last-child { width: auto; text-align-last: left; }
.scrollbar { width: 23px; background: #fcfcfc; display: flex; flex-direction: column; align-items: center; padding: 12px 0 11px 1px; }
.up, .down { border: 7.5px solid transparent; }
.up { border-top: 0; border-bottom: 11px solid #8a8a8a; }
.down { border-bottom: 0; border-top: 11px solid #8a8a8a; margin-top: auto; }
.thumb { width: 13px; height: 28px; margin-top: 300px; border-radius: 7px; background: #8a8a8a; }

.panel { height: 176px; margin-top: 30px; padding: 30px; border-radius: 18px; background: #fff; box-shadow: 0 6px 22px rgba(0,0,0,.1); }
.buttons { display: flex; gap: 15px; }
button { min-width: 120px; height: 61px; padding: 0 30px; border: 0; border-radius: 7.5px; background: #95a5a6; color: #fff; font: 500 21.6px "Open Sans", "Noto Sans CJK SC", sans-serif; white-space: nowrap; }
button.primary { background: #667eea; }
button.danger { background: #e74c3c; }
button.off { opacity: .5; }
button.test { width: 181px; letter-spacing: .15px; padding: 0; }
.hint { display: flex; align-items: center; gap: 10px; height: 34px; margin: 24px 0 0 5px; font-size: 24px; color: #666; }
.hint svg { width: 25px; height: 25px; transform: skewX(-6deg); }

.taskbar { height: 72px; border-top: 2px solid #bdbdbd; background: #eee; display: flex; }
.weather { width: 831px; display: flex; padding: 6px 0 0 28px; letter-spacing: -.8px; }
.weather svg { width: 48px; height: 48px; }
.weather div, .clock { display: flex; flex-direction: column; line-height: 24px; padding-top: 3px; }
.weather .dim { color: #555; letter-spacing: 0; }
.badge { font: 17px "Open Sans", sans-serif; fill: #fff; }
.pinned { width: 1180px; display: flex; align-items: center; height: 68px; }
.start { width: 35px; height: 35px; margin-right: 20px; }
.search { width: 328px; height: 47px; border-radius: 24px; border: 1.5px solid #d4d4d4; background: #fbfbfb; display: flex; align-items: center; padding: 0 11px 0 15px; color: #555; font-size: 21px; }
.mag { width: 24px; height: 24px; margin-right: 15px; }
.art { width: 64px; height: 40px; margin-left: auto; }
.apps { display: flex; margin-left: 4px; }
.app { width: 58px; height: 59px; margin: 0 4px; border-radius: 6px; display: flex; flex-direction: column; align-items: center; justify-content: space-between; padding: 12px 0 0; }
.app svg { width: 36px; height: 36px; }
.app i { width: 9px; height: 5px; border-radius: 3px; background: #868686; }
.app.open { background: #f9f9f9; box-shadow: 0 0 0 1px #e2e2e2; }
.app.open i { width: 24px; background: #25808e; }
.app.alert { background: #e8aeaa; }
.app.alert i { width: 48px; background: #c42b1c; }
.tray { width: 520px; display: flex; align-items: center; height: 70px; }
.tray > span { display: flex; justify-content: center; }
.t48 { width: 48px; }
.t46 { width: 46px; }
.t70 { width: 70px; }
.t44 { width: 44px; }
.t26 { width: 26px; }
.ime { font-size: 22px; }
.clock { width: 93px; text-align: right; white-space: nowrap; align-items: flex-end; letter-spacing: -.4px; }
.tray .clock { padding: 0; }
```
